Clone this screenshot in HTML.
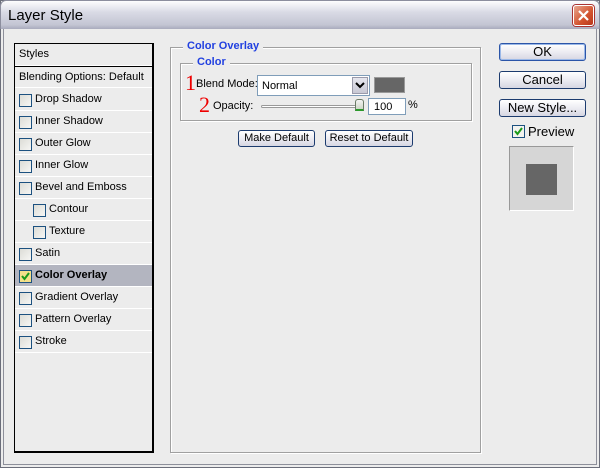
<!DOCTYPE html>
<html><head><style>
*{margin:0;padding:0;box-sizing:border-box}
body{width:600px;height:468px;overflow:hidden;font-family:"Liberation Sans",sans-serif;font-size:11px;color:#000;background:#ececec;position:relative;white-space:nowrap}
.abs{position:absolute}
#frame{left:0;top:0;width:600px;height:468px;border:1px solid #6b6e7a;background:#ececec}
#inner{left:3px;top:28px;width:594px;height:437px;border:1px solid #8d8f9a}
#title{left:0;top:0;width:600px;height:29px;background:linear-gradient(#fdfdfe,#d9dae5 40%,#c3c5d3 85%,#a9abbd);border-radius:6px 6px 0 0;border:1px solid #8c8e9e;border-bottom:none}
#title span{position:absolute;left:7px;top:6px;font-size:15px;color:#000}
#close{left:573px;top:5px;width:21px;height:21px;border-radius:3px;background:linear-gradient(135deg,#e8a68f,#d2532f 60%,#b8371c);border:1px solid #fff;box-shadow:0 0 0 1px #a33}
#list{left:14px;top:43px;width:140px;height:410px;border:1px solid #000;border-width:1px 2px 2px 1px;background:#ececec}
.row{position:absolute;left:0;width:137px;height:22px;border-bottom:1px solid #fff;line-height:21px}
.cb{position:absolute;top:5px;width:13px;height:13px;border:1px solid #1c5180;background:linear-gradient(135deg,#dcdcd6,#f6f6f4)}
.gb{position:absolute;border:1px solid #a0a0a0;box-shadow:1px 1px 0 #fff inset, 1px 1px 0 #fff}
.lg{position:absolute;background:#ececec;color:#2140e0;font-weight:bold;padding:0 4px}
.btn{position:absolute;border:1px solid #1c3b6e;border-radius:3px;background:linear-gradient(#fff,#ececf2 50%,#d6d6e2);text-align:center;font-size:11px}
.rb{font-size:13px;color:#000}
.red{position:absolute;color:#e00;font-family:"Liberation Serif",serif;font-size:22px}
</style></head><body>
<div class="abs" id="frame"></div>
<div class="abs" id="inner"></div>
<div class="abs" id="title"><span>Layer Style</span></div>
<div class="abs" id="close"><svg width="19" height="19" viewBox="0 0 19 19"><path d="M5 5L14 14M14 5L5 14" stroke="#fff" stroke-width="2.2"/></svg></div>

<div class="abs" id="list">
 <div class="row" style="top:0;padding-left:4px">Styles</div>
 <div class="row" style="top:22px;padding-left:4px;border-top:1px solid #000">Blending Options: Default</div>
 <div class="row" style="top:45px"><div class="cb" style="left:4px"></div><span style="margin-left:20px">Drop Shadow</span></div>
 <div class="row" style="top:67px"><div class="cb" style="left:4px"></div><span style="margin-left:20px">Inner Shadow</span></div>
 <div class="row" style="top:89px"><div class="cb" style="left:4px"></div><span style="margin-left:20px">Outer Glow</span></div>
 <div class="row" style="top:111px"><div class="cb" style="left:4px"></div><span style="margin-left:20px">Inner Glow</span></div>
 <div class="row" style="top:133px"><div class="cb" style="left:4px"></div><span style="margin-left:20px">Bevel and Emboss</span></div>
 <div class="row" style="top:155px"><div class="cb" style="left:18px"></div><span style="margin-left:34px">Contour</span></div>
 <div class="row" style="top:177px"><div class="cb" style="left:18px"></div><span style="margin-left:34px">Texture</span></div>
 <div class="row" style="top:199px"><div class="cb" style="left:4px"></div><span style="margin-left:20px">Satin</span></div>
 <div class="row" style="top:221px;background:#b3b5c0"><div class="cb" style="left:4px;background:#f4e08a"><svg width="11" height="11" style="position:absolute;left:0;top:0"><path d="M2 5L4.5 8L9 2" stroke="#1a9a1a" stroke-width="2" fill="none"/></svg></div><span style="margin-left:20px;font-weight:bold">Color Overlay</span></div>
 <div class="row" style="top:243px"><div class="cb" style="left:4px"></div><span style="margin-left:20px">Gradient Overlay</span></div>
 <div class="row" style="top:265px"><div class="cb" style="left:4px"></div><span style="margin-left:20px">Pattern Overlay</span></div>
 <div class="row" style="top:287px"><div class="cb" style="left:4px"></div><span style="margin-left:20px">Stroke</span></div>
</div>

<div class="gb" style="left:170px;top:47px;width:311px;height:406px"></div>
<div class="lg" style="left:183px;top:40px">Color Overlay</div>
<div class="gb" style="left:180px;top:63px;width:292px;height:58px"></div>
<div class="lg" style="left:193px;top:56px">Color</div>

<div class="red" style="left:185px;top:70px">1</div>
<div class="abs" style="left:196px;top:78px">Blend Mode:</div>
<div class="abs" style="left:257px;top:75px;width:113px;height:21px;background:#fff;border:1px solid #7f9db9"><span style="position:absolute;left:4px;top:4px">Normal</span>
 <div style="position:absolute;right:1px;top:1px;width:16px;height:17px;background:linear-gradient(#e6e6ee,#c8c8d4);border:1px solid #9a9aaa"><svg width="14" height="15"><path d="M3 5L7 9L11 5" stroke="#000" stroke-width="2" fill="none"/></svg></div></div>
<div class="abs" style="left:374px;top:77px;width:31px;height:16px;background:#666;border:1px solid #999"></div>

<div class="red" style="left:199px;top:92px">2</div>
<div class="abs" style="left:213px;top:100px">Opacity:</div>
<div class="abs" style="left:261px;top:105px;width:102px;height:3px;border:1px solid #999;border-radius:2px;background:#fff"></div>
<div class="abs" style="left:355px;top:99px;width:9px;height:12px;background:linear-gradient(#f4f4f4,#cfd6c8);border:1px solid #6a7a66;border-bottom:2px solid #2a9a2a;border-radius:3px 3px 0 0"></div>
<div class="abs" style="left:368px;top:98px;width:38px;height:17px;background:#fff;border:1px solid #7f9db9;padding:2px 0 0 5px">100</div>
<div class="abs" style="left:408px;top:99px">%</div>

<div class="btn" style="left:238px;top:130px;width:77px;height:17px;line-height:15px">Make Default</div>
<div class="btn" style="left:325px;top:130px;width:88px;height:17px;line-height:15px">Reset to Default</div>

<div class="btn rb" style="left:499px;top:43px;width:87px;height:18px;line-height:16px;border-color:#2b55a8;box-shadow:inset 0 0 0 1px #9ab8e8">OK</div>
<div class="btn rb" style="left:499px;top:71px;width:87px;height:18px;line-height:16px">Cancel</div>
<div class="btn rb" style="left:499px;top:99px;width:87px;height:18px;line-height:16px">New Style...</div>
<div class="abs" style="left:512px;top:125px;width:13px;height:13px;border:1px solid #1c5180;background:#f3f3ef"><svg width="11" height="11" style="position:absolute;left:0;top:0"><path d="M2 5L4.5 8L9 2" stroke="#1a9a1a" stroke-width="2" fill="none"/></svg></div>
<div class="abs" style="left:528px;top:124px;font-size:13px">Preview</div>
<div class="abs" style="left:509px;top:146px;width:65px;height:65px;background:#d6d6d6;border:1px solid #999;border-right-color:#fff;border-bottom-color:#fff"><div style="position:absolute;left:16px;top:17px;width:31px;height:31px;background:#666"></div></div>
</body></html>
